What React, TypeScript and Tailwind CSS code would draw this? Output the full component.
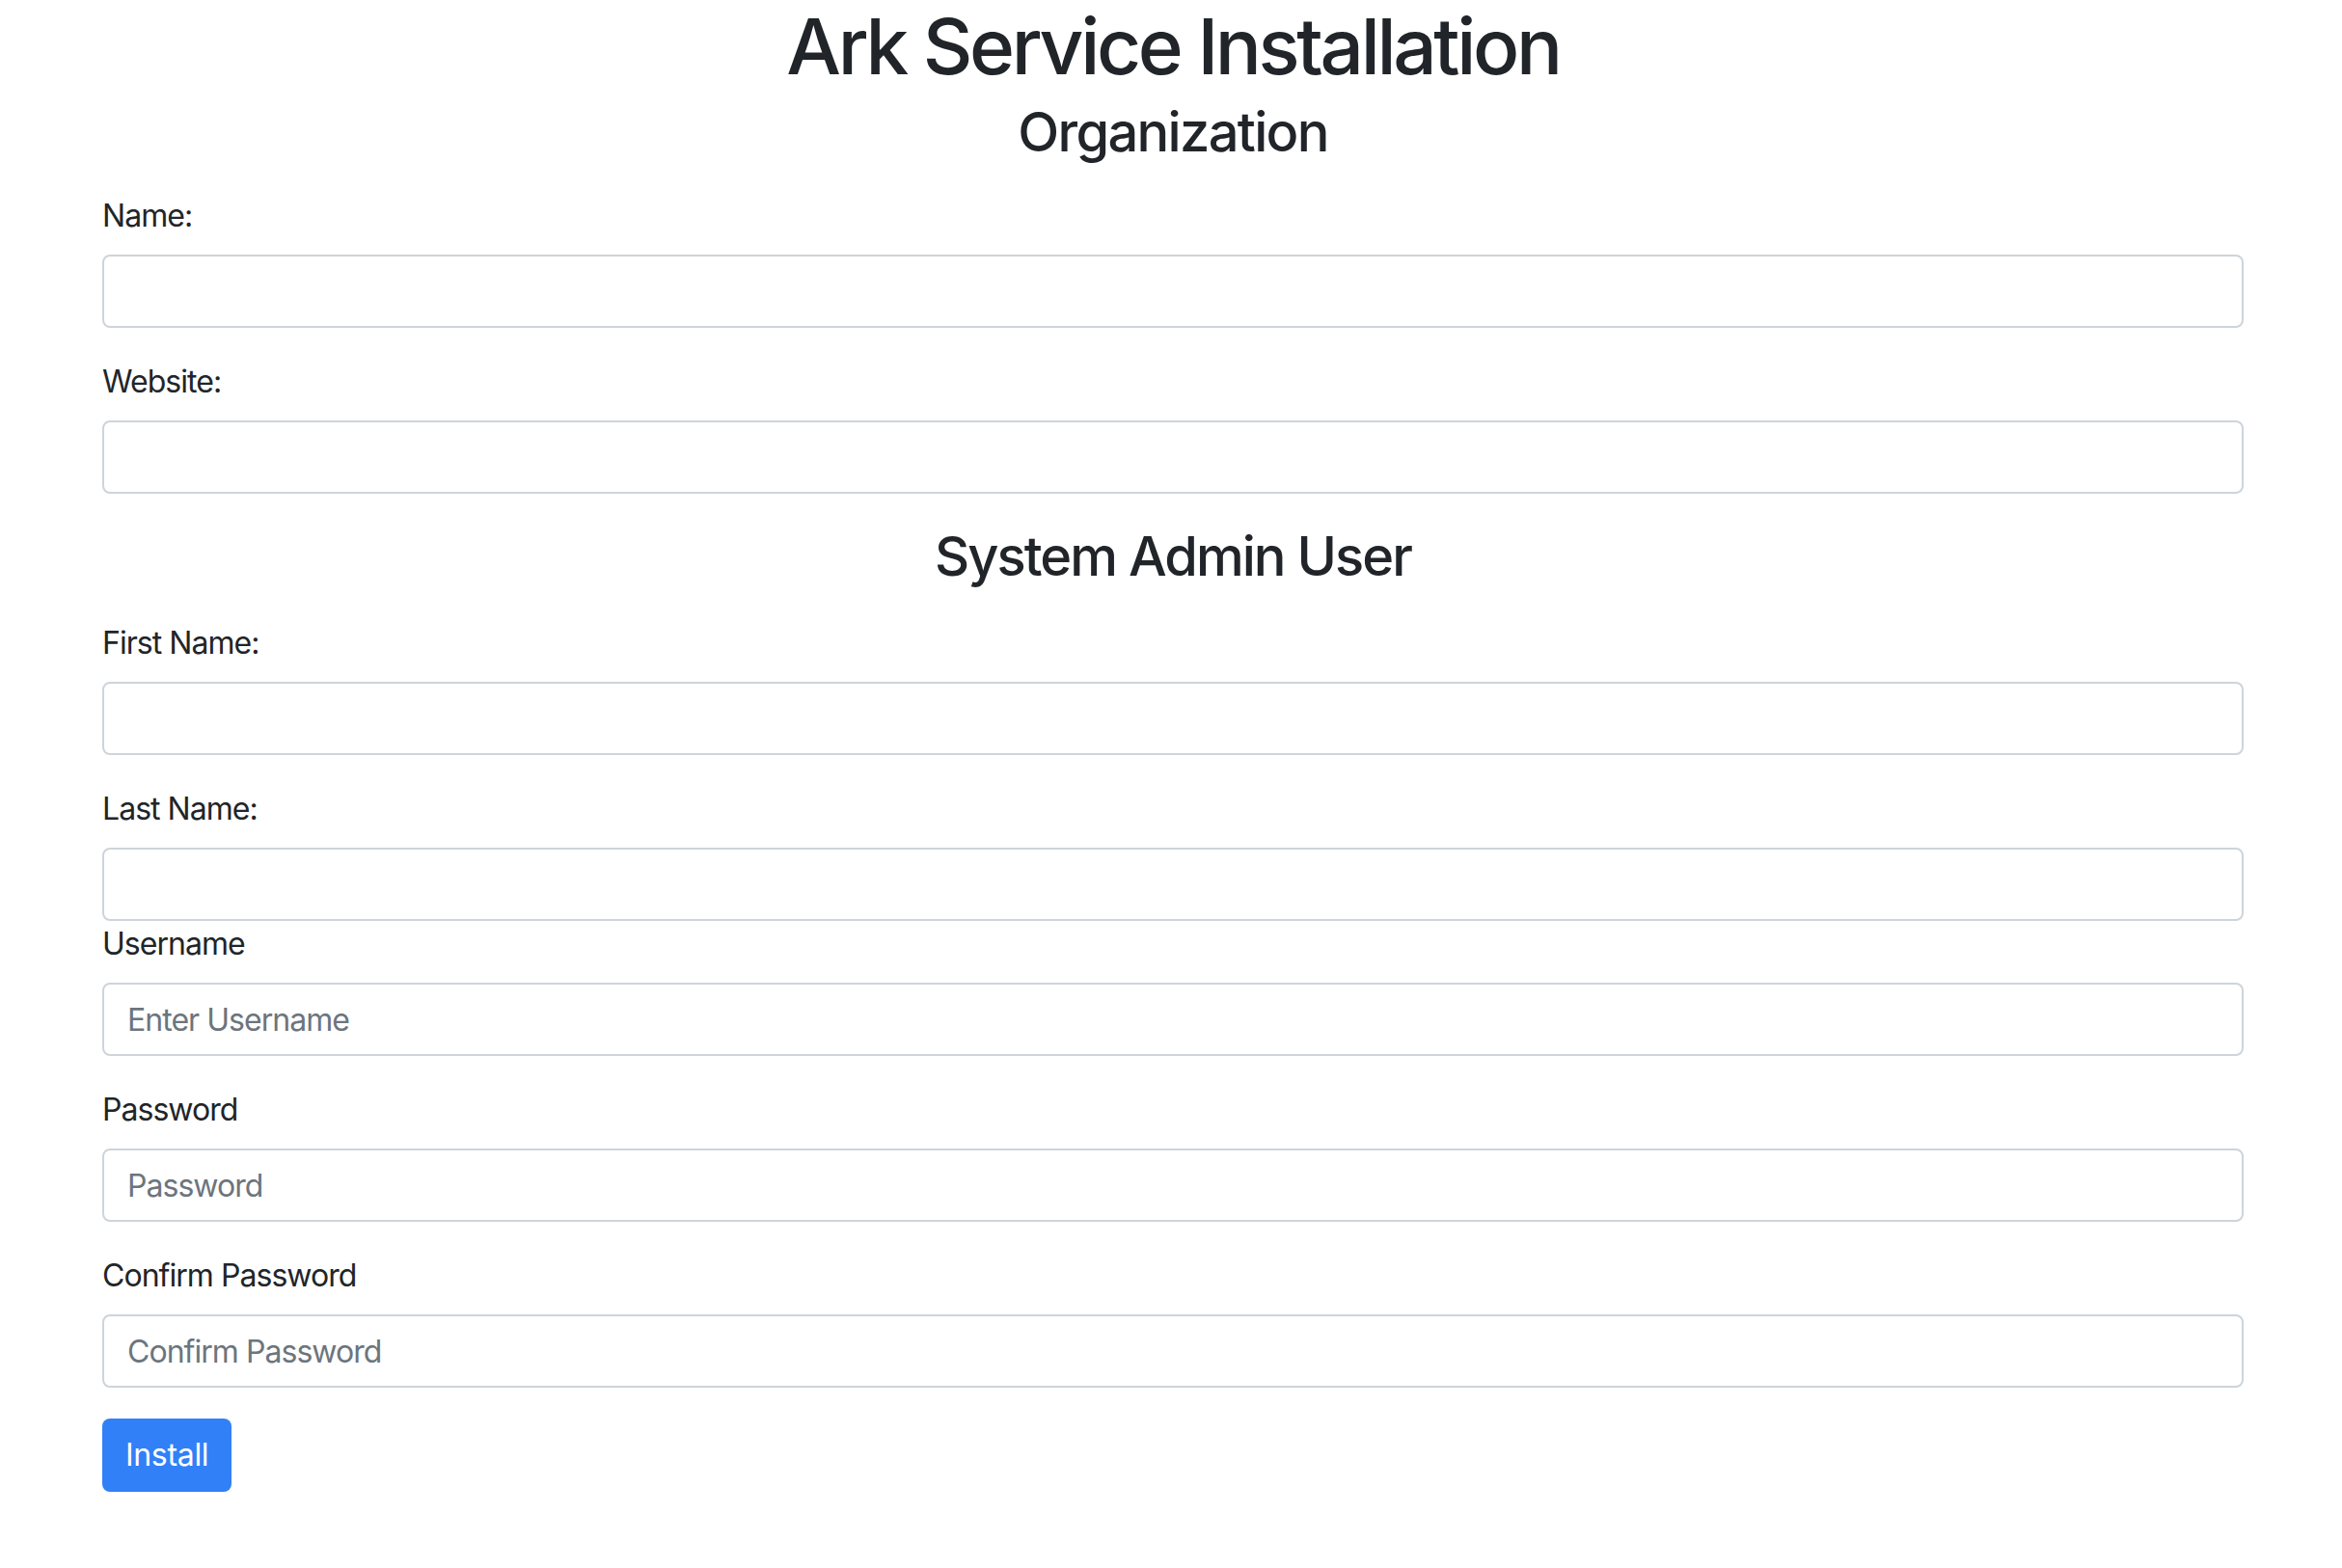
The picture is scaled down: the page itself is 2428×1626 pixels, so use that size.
import React from 'react'

function Field({ label, placeholder, type = 'text', last = false }: { label: string; placeholder?: string; type?: string; last?: boolean }) {
  return (
    <div className={last ? '' : 'mb-[32px]'}>
      <label className="block text-[32px] leading-[48px] tracking-[-0.03em] mb-[16px]">{label}</label>
      <input
        type={type}
        placeholder={placeholder}
        className="block w-full h-[76px] px-[24px] text-[32px] tracking-[-0.03em] text-[#495057] bg-white border-2 border-[#ced4da] rounded-[8px] placeholder:text-[#6c757d] outline-none"
      />
    </div>
  )
}

export default function App() {
  return (
    <div className="min-h-screen bg-white font-['Inter',sans-serif] text-[#212529]">
      <div className="w-[2220px] ml-[106px]">
        <h1 className="text-center text-[80px] leading-[96px] font-medium tracking-[-0.042em]">Ark Service Installation</h1>
        <h3 className="mt-[8px] mb-[29px] text-center text-[56px] leading-[67px] font-medium tracking-[-0.03em]">Organization</h3>

        <Field label="Name:" />
        <Field label="Website:" />

        <h3 className="mb-[32px] text-center text-[56px] leading-[67px] font-medium tracking-[-0.035em]">System Admin User</h3>

        <Field label="First Name:" />
        <Field label="Last Name:" last />
        <Field label="Username" placeholder="Enter Username" />
        <Field label="Password" placeholder="Password" type="password" />
        <Field label="Confirm Password" placeholder="Confirm Password" type="password" />

        <button className="h-[76px] px-[24px] text-[32px] tracking-[-0.01em] text-white bg-[#3280f7] rounded-[8px]">Install</button>
      </div>
    </div>
  )
}
